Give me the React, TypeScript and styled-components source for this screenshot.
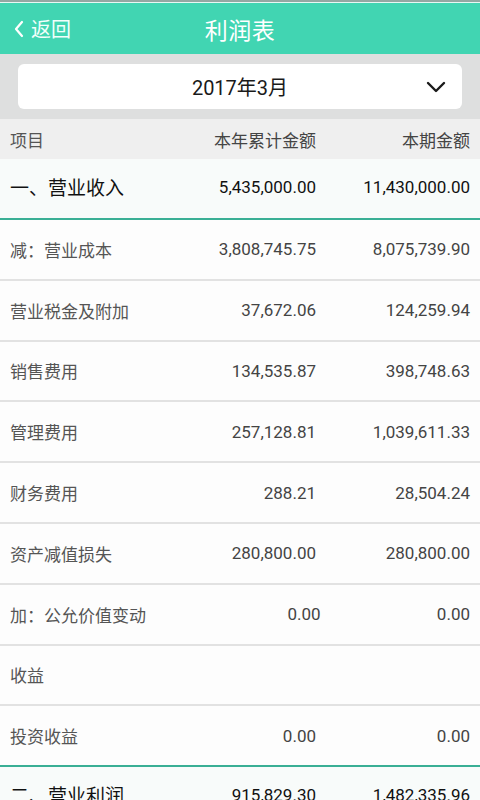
import React from "react";
import styled, { createGlobalStyle } from "styled-components";

const Global = createGlobalStyle`
  html, body { margin: 0; padding: 0; background: #fdfdfd; }
  body { font-family: Roboto, "Noto Sans CJK SC", sans-serif; }
  * { box-sizing: border-box; }
`;

type Row = { name: string; year: string; period: string; major?: boolean; lastInGroup?: boolean };

const rows: Row[] = [
  { name: "一、营业收入", year: "5,435,000.00", period: "11,430,000.00", major: true, lastInGroup: true },
  { name: "减：营业成本", year: "3,808,745.75", period: "8,075,739.90" },
  { name: "营业税金及附加", year: "37,672.06", period: "124,259.94" },
  { name: "销售费用", year: "134,535.87", period: "398,748.63" },
  { name: "管理费用", year: "257,128.81", period: "1,039,611.33" },
  { name: "财务费用", year: "288.21", period: "28,504.24" },
  { name: "资产减值损失", year: "280,800.00", period: "280,800.00" },
  { name: "加：公允价值变动", year: "0.00", period: "0.00" },
  { name: "收益", year: "", period: "" },
  { name: "投资收益", year: "0.00", period: "0.00", lastInGroup: true },
  { name: "二、营业利润", year: "915,829.30", period: "1,482,335.96", major: true },
];

const App = () => {
  return (
    <Page>
      <Global />
      <StatusEdge />
      <TopBar>
        <Back>
          <svg width="12" height="20" viewBox="0 0 12 20">
            <path d="M9 3 L3 10 L9 17" fill="none" stroke="#ffffff" strokeWidth="2.2" strokeLinecap="round" strokeLinejoin="round" />
          </svg>
          <span>返回</span>
        </Back>
        <Title>利润表</Title>
      </TopBar>
      <Picker>
        <SelectBox>
          <SelectText>2017年3月</SelectText>
          <Chevron width="20" height="12" viewBox="0 0 20 12">
            <path d="M2 2 L10 10 L18 2" fill="none" stroke="#1a1a1a" strokeWidth="2.4" strokeLinecap="round" strokeLinejoin="round" />
          </Chevron>
        </SelectBox>
      </Picker>
      <HeadRow>
        <NameCell>项目</NameCell>
        <YearCell>本年累计金额</YearCell>
        <PeriodCell>本期金额</PeriodCell>
      </HeadRow>
      {rows.map((r) => (
        <DataRow key={r.name} $major={r.major} $last={r.lastInGroup}>
          <NameCell $major={r.major}>{r.name}</NameCell>
          <YearCell $major={r.major}>{r.year}</YearCell>
          <PeriodCell $major={r.major}>{r.period}</PeriodCell>
        </DataRow>
      ))}
    </Page>
  );
};

export default App;

const Page = styled.div`
  width: 480px;
  height: 800px;
  overflow: hidden;
  background: #fdfdfd;
`;

const StatusEdge = styled.div`
  height: 3px;
  background: #93a8a3;
  border-bottom: 1px solid #e8f8f4;
`;

const TopBar = styled.div`
  height: 51px;
  background: #41d5b2;
  display: flex;
  align-items: center;
  justify-content: center;
  position: relative;
  color: #ffffff;
`;

const Back = styled.div`
  position: absolute;
  left: 13px;
  top: 0;
  bottom: 0;
  display: flex;
  align-items: center;
  gap: 6px;
  font-size: 20px;
  color: #f2fffb;
`;

const Title = styled.div`
  font-size: 23px;
  letter-spacing: 0.5px;
`;

const Picker = styled.div`
  height: 65px;
  background: #dedfdf;
  padding: 10px 18px 10px 18px;
`;

const SelectBox = styled.div`
  height: 45px;
  background: #ffffff;
  border-radius: 6px;
  display: flex;
  align-items: center;
  justify-content: center;
  position: relative;
`;

const SelectText = styled.div`
  font-size: 20px;
  color: #1a1a1a;
`;

const Chevron = styled.svg`
  position: absolute;
  right: 16px;
  top: 17px;
`;

const HeadRow = styled.div`
  height: 40px;
  background: #efefef;
  display: flex;
  align-items: center;
  padding: 0 10px;
  font-size: 16px;
  color: #555555;
`;

const DataRow = styled.div<{ $major?: boolean; $last?: boolean }>`
  height: ${(p) => (p.$major ? "61px" : "60.8px")};
  flex-shrink: 0;
  display: flex;
  align-items: center;
  padding: 0 10px ${(p) => (p.$major ? "4px" : "0")};
  background: ${(p) => (p.$major ? "#f8fbfa" : "#fdfdfd")};
  border-bottom: 2px solid ${(p) => (p.$last ? "#3aaf95" : "#e2e2e2")};
`;

const NameCell = styled.div<{ $major?: boolean }>`
  flex: 1;
  font-size: ${(p) => (p.$major ? "19px" : "17px")};
  color: ${(p) => (p.$major ? "#111111" : "#555555")};
  white-space: nowrap;
`;

const YearCell = styled.div<{ $major?: boolean }>`
  width: 180px;
  text-align: right;
  font-size: 17px;
  color: ${(p) => (p.$major ? "#111111" : "#444444")};
  white-space: nowrap;
`;

const PeriodCell = styled.div<{ $major?: boolean }>`
  width: 154px;
  text-align: right;
  font-size: 17px;
  color: ${(p) => (p.$major ? "#111111" : "#444444")};
  white-space: nowrap;
`;
